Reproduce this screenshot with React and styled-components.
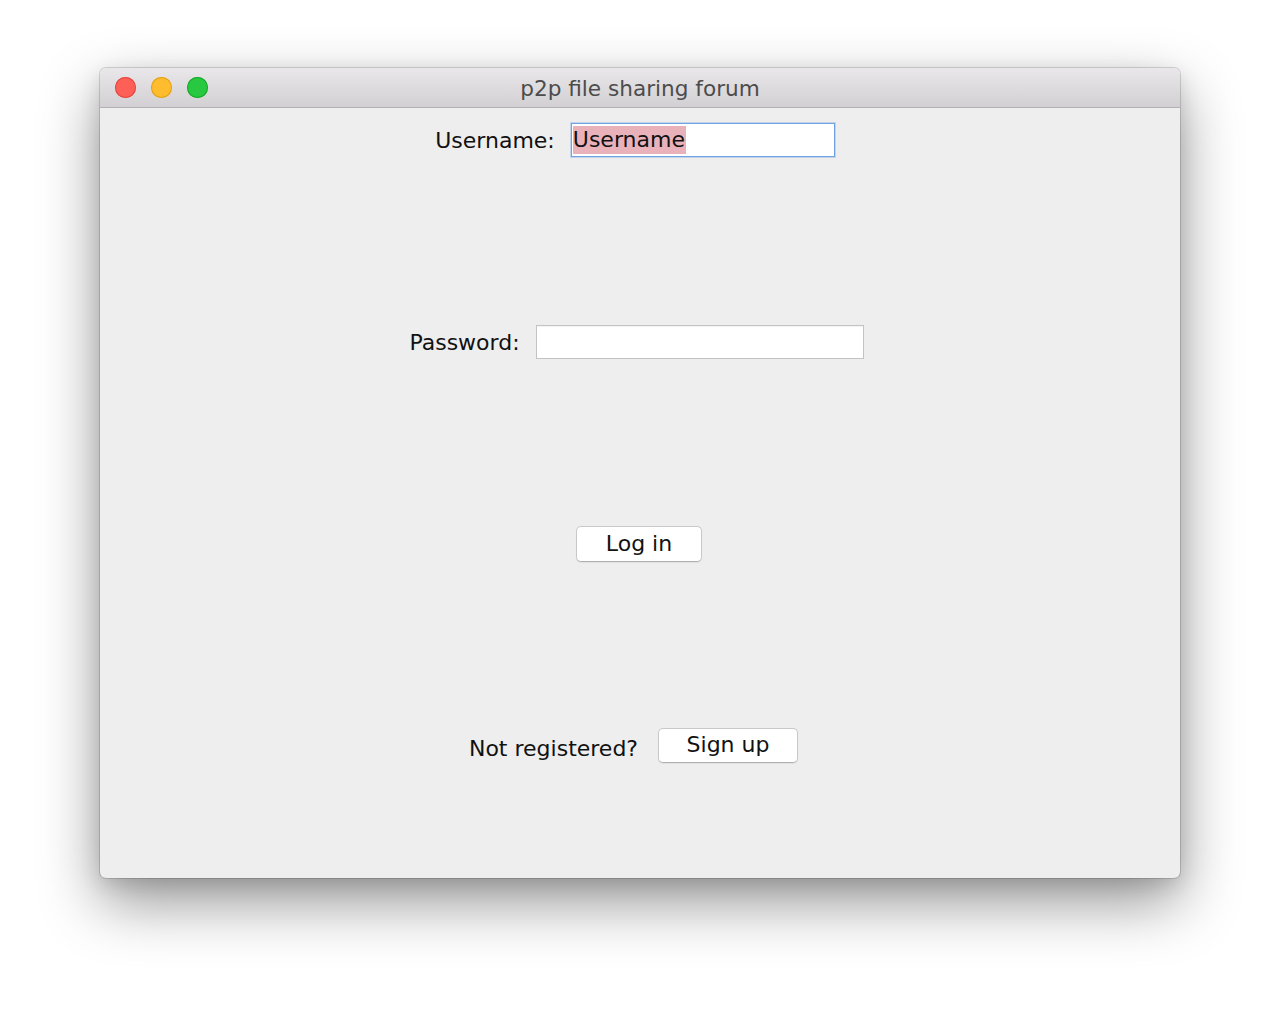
import React from "react";
import styled, { createGlobalStyle } from "styled-components";

const Global = createGlobalStyle`
  html, body { margin: 0; padding: 0; background: #ffffff; }
  body { width: 1280px; height: 1010px; overflow: hidden; font-family: "DejaVu Sans", "Liberation Sans", sans-serif; }
`;

const Stage = styled.div`
  width: 1280px;
  height: 1010px;
  padding-top: 68px;
  padding-left: 100px;
  box-sizing: border-box;
`;

const Window = styled.div`
  width: 1080px;
  height: 810px;
  border-radius: 6px;
  overflow: hidden;
  background: #eeeeee;
  box-shadow: 0 0 0 1px rgba(0, 0, 0, 0.14), 0 24px 60px rgba(0, 0, 0, 0.42), 0 6px 20px rgba(0, 0, 0, 0.12);
  display: flex;
  flex-direction: column;
`;

const TitleBar = styled.div`
  height: 39px;
  flex: none;
  background: linear-gradient(#e9e7e9, #d2d0d2);
  border-bottom: 1px solid #b3b1b3;
  display: flex;
  align-items: center;
  position: relative;
  padding-left: 15px;
  gap: 15px;
`;

const Light = styled.span`
  width: 21px;
  height: 21px;
  border-radius: 50%;
  background: ${(p) => p.$fill};
  box-shadow: inset 0 0 0 1px ${(p) => p.$edge};
`;

const Title = styled.div`
  position: absolute;
  left: 0;
  right: 0;
  top: 2px;
  bottom: 0;
  display: flex;
  align-items: center;
  justify-content: center;
  font-size: 21.6px;
  color: #4c4c4c;
  pointer-events: none;
`;

const Content = styled.div`
  flex: 1;
  display: grid;
  grid-auto-rows: 201.7px;
  padding-top: 15px;
`;

const Row = styled.div`
  display: flex;
  justify-content: center;
  align-items: flex-start;
  gap: ${(p) => p.$gap}px;
  padding-right: ${(p) => p.$shift}px;
`;

const Label = styled.span`
  height: 35px;
  display: flex;
  align-items: center;
  font-size: 22px;
  color: #111;
  padding-top: ${(p) => p.$dy || 0}px;
`;

const Field = styled.div`
  width: ${(p) => p.$w}px;
  height: 34px;
  box-sizing: border-box;
  background: #fff;
  border: 1px solid ${(p) => (p.$focus ? "#6fa3e3" : "#c3c3c3")};
  box-shadow: ${(p) => (p.$focus ? "0 0 0 1px rgba(111,163,227,0.35)" : "inset 0 1px 0 rgba(0,0,0,0.04)")};
  display: flex;
  align-items: center;
  padding-left: 1px;
`;

const Selected = styled.span`
  background: #e9b1ba;
  font-size: 22px;
  color: #111;
  height: 28px;
  line-height: 28px;
  padding: 0 1px 0 0;
`;

const Button = styled.button`
  width: ${(p) => p.$w}px;
  height: ${(p) => p.$h || 36}px;
  box-sizing: border-box;
  background: #fff;
  border: 1px solid #c8c8c8;
  border-bottom-color: #b0b0b0;
  border-radius: 5px;
  box-shadow: 0 1px 1px rgba(0, 0, 0, 0.06);
  font-family: inherit;
  font-size: 22px;
  color: #111;
  padding: 0 0 2px;
  display: flex;
  align-items: center;
  justify-content: center;
`;

export default function App() {
  return (
    <>
      <Global />
      <Stage>
        <Window>
          <TitleBar>
            <Light $fill="#fe5f57" $edge="#e2463f" />
            <Light $fill="#febc2e" $edge="#e1a116" />
            <Light $fill="#28c840" $edge="#14a926" />
            <Title>p2p file sharing forum</Title>
          </TitleBar>
          <Content>
            <Row $gap={16} $shift={10}>
              <Label>Username:</Label>
              <Field $w={264} $focus>
                <Selected>Username</Selected>
              </Field>
            </Row>
            <Row $gap={16} $shift={7}>
              <Label>Password:</Label>
              <Field $w={328} />
            </Row>
            <Row $gap={0} $shift={2}>
              <Button $w={126}>Log in</Button>
            </Row>
            <Row $gap={20} $shift={13}>
              <Label $dy={3}>Not registered?</Label>
              <Button $w={140} $h={35}>Sign up</Button>
            </Row>
          </Content>
        </Window>
      </Stage>
    </>
  );
}
